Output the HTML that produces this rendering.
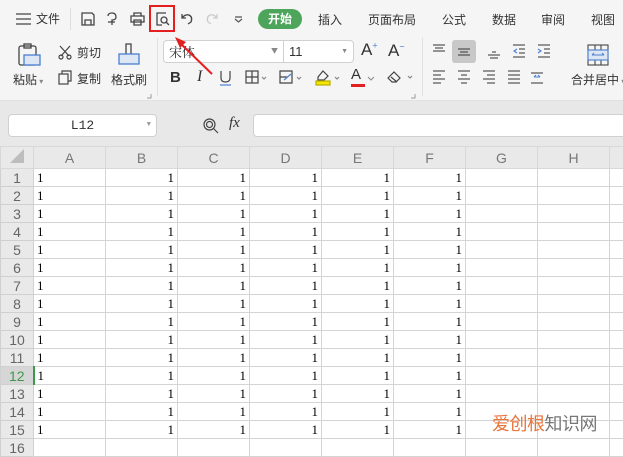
<!DOCTYPE html>
<html><head><meta charset="utf-8"><style>
*{margin:0;padding:0;box-sizing:border-box}
body{width:623px;height:440px;overflow:hidden;background:#fff;font-family:"Liberation Sans","Noto Sans CJK SC",sans-serif;position:relative;color:#333}
.a{position:absolute}
.t{font-size:12px;color:#333;white-space:nowrap}
.grid{position:absolute;left:0;top:146px;width:660px}
table{border-collapse:collapse;table-layout:fixed;width:639px}
td{border:1px solid #d4d4d4;height:18px;font-size:13px;font-family:"Liberation Serif",serif;color:#000;padding:0 3px;line-height:16px;overflow:hidden}
td.r{text-align:right}
td.h{background:#e9e9e9;color:#666;text-align:center;font-family:"Liberation Sans",sans-serif;font-size:14px;border-color:#d0d0d0}
tr.hd td{height:22px;background:#e9e9e9;color:#777;text-align:center;font-family:"Liberation Sans",sans-serif;font-size:14px;border-color:#d8d8d8}
svg{position:absolute;overflow:visible}
</style></head><body>
<div class="a" style="left:0;top:0;width:623px;height:101px;background:#f5f5f5;border-bottom:1px solid #e0e0e0"></div>
<div class="a" style="left:0;top:101px;width:623px;height:45px;background:#e8e8e8"></div>
<svg style="left:16px;top:13px" width="16" height="12"><path d="M0 1H15M0 6H15M0 11H15" stroke="#444" stroke-width="1.3"/></svg>
<div class="a t" style="left:36px;top:10px;font-size:12px">文件</div>
<div class="a" style="left:70px;top:8px;width:1px;height:22px;background:#ddd"></div>
<svg style="left:81px;top:12px" width="14" height="14" fill="none" stroke="#444" stroke-width="1.3"><path d="M1 1H11L13 3V13H1Z M4 13V8H10V13"/></svg>
<svg style="left:106px;top:12px" width="14" height="14" fill="none" stroke="#444" stroke-width="1.3"><path d="M2 4Q2 1 6 1Q10 1 10 5Q10 8 6 8V13M2 10H9"/></svg>
<svg style="left:130px;top:12px" width="15" height="14" fill="none" stroke="#444" stroke-width="1.3"><path d="M4 4V1H11V4M1 4H14V10H1Z M4 8H11V13H4Z"/></svg>
<div class="a" style="left:149px;top:5px;width:26px;height:27px;border:2px solid #e41f1f"></div>
<svg style="left:156px;top:12px" width="14" height="14" fill="none" stroke="#444" stroke-width="1.3"><path d="M10 1H1V13H6"/><circle cx="8" cy="8" r="3"/><path d="M10 10L13 13"/></svg>
<svg style="left:181px;top:13px" width="13" height="12" fill="none" stroke="#444" stroke-width="1.3"><path d="M1 1V5H5M1 5Q4 1 8 2Q12 4 10 9L7 11"/></svg>
<svg style="left:205px;top:13px" width="13" height="12" fill="none" stroke="#ccc" stroke-width="1.3"><path d="M12 1V5H8M12 5Q9 1 5 2Q1 4 3 9L6 11"/></svg>
<svg style="left:234px;top:16px" width="9" height="6" fill="none" stroke="#555" stroke-width="1.2"><path d="M1 1H8M1 3L4.5 6L8 3"/></svg>
<div class="a" style="left:258px;top:9px;width:44px;height:20px;border-radius:10px;background:#4ca55a;color:#fff;font-size:12px;font-weight:bold;text-align:center;line-height:20px">开始</div>
<div class="a t" style="left:318px;top:11px">插入</div>
<div class="a t" style="left:368px;top:11px">页面布局</div>
<div class="a t" style="left:442px;top:11px">公式</div>
<div class="a t" style="left:492px;top:11px">数据</div>
<div class="a t" style="left:541px;top:11px">审阅</div>
<div class="a t" style="left:591px;top:11px">视图</div>
<svg style="left:17px;top:43px" width="24" height="24" fill="none" stroke="#444" stroke-width="1.3"><rect x="2" y="3" width="17" height="19" rx="2"/><rect x="7" y="1" width="7" height="4"/><rect x="7" y="12" width="16" height="10" fill="#dce6f5" stroke="#4a7fd0"/></svg>
<div class="a t" style="left:13px;top:71px">粘贴<span style="font-size:8px;color:#888"> ▾</span></div>
<svg style="left:58px;top:45px" width="14" height="14" fill="none" stroke="#444" stroke-width="1.2"><path d="M2 1L11 11M12 1L3 11"/><circle cx="3" cy="12" r="2"/><circle cx="11" cy="12" r="2"/></svg>
<div class="a t" style="left:77px;top:44px">剪切</div>
<svg style="left:58px;top:70px" width="14" height="15" fill="none" stroke="#444" stroke-width="1.2"><rect x="1" y="4" width="9" height="10"/><path d="M4 4V1H13V11H10"/></svg>
<div class="a t" style="left:77px;top:70px">复制</div>
<svg style="left:118px;top:42px" width="22" height="24" fill="none" stroke="#444" stroke-width="1.3"><path d="M8 12V2H13V12"/><rect x="1" y="12" width="20" height="10" fill="#dce6f5" stroke="#4a7fd0"/></svg>
<div class="a t" style="left:111px;top:71px">格式刷</div>
<div class="a" style="left:157px;top:38px;width:1px;height:58px;background:#e0e0e0"></div>
<div class="a" style="left:163px;top:40px;width:121px;height:23px;background:#fff;border:1px solid #d0d0d0;border-radius:4px 0 0 4px;font-size:13px;line-height:21px;padding-left:5px;font-family:'Noto Serif CJK SC',serif">宋体<span style="position:absolute;right:5px;font-size:7px;color:#888">▼</span></div>
<div class="a" style="left:283px;top:40px;width:71px;height:23px;background:#fff;border:1px solid #d0d0d0;border-radius:0 4px 4px 0;font-size:13px;line-height:21px;padding-left:5px">11<span style="position:absolute;right:5px;font-size:7px;color:#888">▼</span></div>
<div class="a" style="left:361px;top:40px;font-size:17px;color:#333">A<sup style="font-size:9px;color:#4a7fd0">+</sup></div>
<div class="a" style="left:388px;top:41px;font-size:17px;color:#333">A<sup style="font-size:9px;color:#4a7fd0">−</sup></div>
<div class="a" style="left:170px;top:69px;font-size:15px;font-weight:bold;color:#333">B</div>
<div class="a" style="left:197px;top:68px;font-size:16px;font-style:italic;font-family:'Liberation Serif',serif;color:#333">I</div>
<svg style="left:219px;top:70px" width="13" height="16" fill="none" stroke="#444" stroke-width="1.2"><path d="M2 1V8Q2 12 6.5 12Q11 12 11 8V1"/><path d="M1 15H12" stroke="#4a7fd0"/></svg>
<svg style="left:245px;top:70px" width="23" height="14" fill="none" stroke="#444" stroke-width="1.2"><rect x="1" y="1" width="12" height="12"/><path d="M7 1V13M1 7H13"/><path d="M17 7L19 9L21 7" stroke="#888"/></svg>
<svg style="left:279px;top:70px" width="24" height="14" fill="none" stroke="#444" stroke-width="1.2"><path d="M1 1H13V13H1Z M1 7H8" /><path d="M5 10L12 4" stroke="#4a7fd0"/><path d="M18 7L20 9L22 7" stroke="#888"/></svg>
<svg style="left:315px;top:68px" width="28" height="19" fill="none" stroke="#444" stroke-width="1.2"><path d="M3 9L8 3L13 8L9 12H3Z"/><rect x="1" y="13" width="14" height="4" fill="#f5e700" stroke="#b8ad00"/><path d="M20 9L22 11L24 9" stroke="#888"/></svg>
<div class="a" style="left:351px;top:66px;font-size:15px;color:#333">A</div>
<div class="a" style="left:351px;top:84px;width:14px;height:3px;background:#e41f1f"></div>
<svg style="left:368px;top:77px" width="6" height="4"><path d="M0 0L3 3L6 0" fill="none" stroke="#888"/></svg>
<svg style="left:387px;top:69px" width="28" height="16" fill="none" stroke="#444" stroke-width="1.2"><path d="M1 9L7 3L13 9L9 13H5Z M4 8L10 13"/><path d="M21 7L23 9L25 7" stroke="#888"/></svg>
<div class="a" style="left:422px;top:38px;width:1px;height:58px;background:#e0e0e0"></div>
<div class="a" style="left:452px;top:40px;width:24px;height:23px;background:#c8c8c8;border-radius:3px"></div>
<svg style="left:432px;top:43px" width="190" height="50" fill="none" stroke="#333" stroke-width="1.1">
<path d="M1 2H13M3 5H11M1 8H13"/>
<path d="M26 6H38M28 9H36M26 12H38"/>
<path d="M56 12H68M58 15H66M60 9H64"/>
<path d="M81 2H93M87 6H93M87 10H93M81 14H93" /><path d="M85 6L82 8L85 10" stroke="#4a7fd0"/>
<path d="M106 2H118M112 6H118M112 10H118M106 14H118"/><path d="M106 6L109 8L106 10" stroke="#4a7fd0"/>
<path d="M1 28H13M1 32H9M1 36H13M1 40H9"/>
<path d="M26 28H38M29 32H35M26 36H38M29 40H35"/>
<path d="M51 28H63M55 32H63M51 36H63M55 40H63"/>
<path d="M76 28H88M76 32H88M76 36H88M76 40H88"/>
<path d="M99 30H111M99 40H111"/><path d="M102 34H108M102 34L104 32M108 34L106 32" stroke="#4a7fd0"/>
</svg>
<svg style="left:587px;top:44px" width="22" height="22" fill="none" stroke="#444" stroke-width="1.1"><rect x="1" y="1" width="20" height="20"/><path d="M1 6H21M1 16H21M8 1V6M14 1V6M8 16V21M14 16V21"/><rect x="1" y="6" width="20" height="10" fill="#dce6f5" stroke="#4a7fd0"/><path d="M5 11H17M5 11L7 9M17 11L15 9" stroke="#4a7fd0"/></svg>
<div class="a t" style="left:571px;top:71px">合并居中<span style="font-size:8px;color:#888"> ▾</span></div>
<svg style="left:147px;top:94px" width="5" height="5"><path d="M4 0V4H0" fill="none" stroke="#999"/></svg>
<svg style="left:411px;top:94px" width="5" height="5"><path d="M4 0V4H0" fill="none" stroke="#999"/></svg>
<svg style="left:0;top:0" width="623" height="440"><path d="M212 74L180 43" stroke="#e41f1f" stroke-width="2"/><path d="M175 37L186 42L180 48Z" fill="#e41f1f"/></svg>
<div class="a" style="left:8px;top:114px;width:149px;height:23px;background:#fff;border:1px solid #d0d0d0;border-radius:4px;text-align:center;font-family:'Liberation Mono',monospace;font-size:13px;line-height:21px;color:#333">L12<span style="position:absolute;right:5px;font-size:7px;color:#999">▼</span></div>
<svg style="left:203px;top:118px" width="16" height="16" fill="none" stroke="#444" stroke-width="1.2"><circle cx="6.5" cy="6.5" r="5.5"/><circle cx="6.5" cy="6.5" r="3"/><path d="M10.5 10.5L15 15"/></svg>
<div class="a" style="left:229px;top:115px;font-family:'Liberation Serif',serif;font-style:italic;font-size:15px;color:#333">fx</div>
<div class="a" style="left:253px;top:114px;width:380px;height:23px;background:#fff;border:1px solid #d0d0d0;border-radius:4px"></div>
<div class="grid">
<table>
<colgroup><col style="width:33px"><col style="width:72px"><col style="width:72px"><col style="width:72px"><col style="width:72px"><col style="width:72px"><col style="width:72px"><col style="width:72px"><col style="width:72px"><col style="width:30px"></colgroup>
<tr class="hd"><td><svg style="position:relative" width="14" height="14"><path d="M14 0V14H0Z" fill="#bdbdbd"/></svg></td><td>A</td><td>B</td><td>C</td><td>D</td><td>E</td><td>F</td><td>G</td><td>H</td><td></td></tr>
<tr><td class="h">1</td><td>1</td><td class="r">1</td><td class="r">1</td><td class="r">1</td><td class="r">1</td><td class="r">1</td><td></td><td></td><td></td></tr>
<tr><td class="h">2</td><td>1</td><td class="r">1</td><td class="r">1</td><td class="r">1</td><td class="r">1</td><td class="r">1</td><td></td><td></td><td></td></tr>
<tr><td class="h">3</td><td>1</td><td class="r">1</td><td class="r">1</td><td class="r">1</td><td class="r">1</td><td class="r">1</td><td></td><td></td><td></td></tr>
<tr><td class="h">4</td><td>1</td><td class="r">1</td><td class="r">1</td><td class="r">1</td><td class="r">1</td><td class="r">1</td><td></td><td></td><td></td></tr>
<tr><td class="h">5</td><td>1</td><td class="r">1</td><td class="r">1</td><td class="r">1</td><td class="r">1</td><td class="r">1</td><td></td><td></td><td></td></tr>
<tr><td class="h">6</td><td>1</td><td class="r">1</td><td class="r">1</td><td class="r">1</td><td class="r">1</td><td class="r">1</td><td></td><td></td><td></td></tr>
<tr><td class="h">7</td><td>1</td><td class="r">1</td><td class="r">1</td><td class="r">1</td><td class="r">1</td><td class="r">1</td><td></td><td></td><td></td></tr>
<tr><td class="h">8</td><td>1</td><td class="r">1</td><td class="r">1</td><td class="r">1</td><td class="r">1</td><td class="r">1</td><td></td><td></td><td></td></tr>
<tr><td class="h">9</td><td>1</td><td class="r">1</td><td class="r">1</td><td class="r">1</td><td class="r">1</td><td class="r">1</td><td></td><td></td><td></td></tr>
<tr><td class="h">10</td><td>1</td><td class="r">1</td><td class="r">1</td><td class="r">1</td><td class="r">1</td><td class="r">1</td><td></td><td></td><td></td></tr>
<tr><td class="h">11</td><td>1</td><td class="r">1</td><td class="r">1</td><td class="r">1</td><td class="r">1</td><td class="r">1</td><td></td><td></td><td></td></tr>
<tr><td class="h" style="background:#d6d6d6;color:#3a9a4a;border-right:2px solid #3a9a4a">12</td><td>1</td><td class="r">1</td><td class="r">1</td><td class="r">1</td><td class="r">1</td><td class="r">1</td><td></td><td></td><td></td></tr>
<tr><td class="h">13</td><td>1</td><td class="r">1</td><td class="r">1</td><td class="r">1</td><td class="r">1</td><td class="r">1</td><td></td><td></td><td></td></tr>
<tr><td class="h">14</td><td>1</td><td class="r">1</td><td class="r">1</td><td class="r">1</td><td class="r">1</td><td class="r">1</td><td></td><td></td><td></td></tr>
<tr><td class="h">15</td><td>1</td><td class="r">1</td><td class="r">1</td><td class="r">1</td><td class="r">1</td><td class="r">1</td><td></td><td></td><td></td></tr>
<tr><td class="h">16</td><td></td><td></td><td></td><td></td><td></td><td></td><td></td><td></td><td></td></tr>
</table></div>
<div class="a" style="left:492px;top:410px;font-size:18px;letter-spacing:-0.5px;white-space:nowrap"><span style="color:#e8743b">爱创根</span><span style="color:#777">知识网</span></div>
</body></html>
